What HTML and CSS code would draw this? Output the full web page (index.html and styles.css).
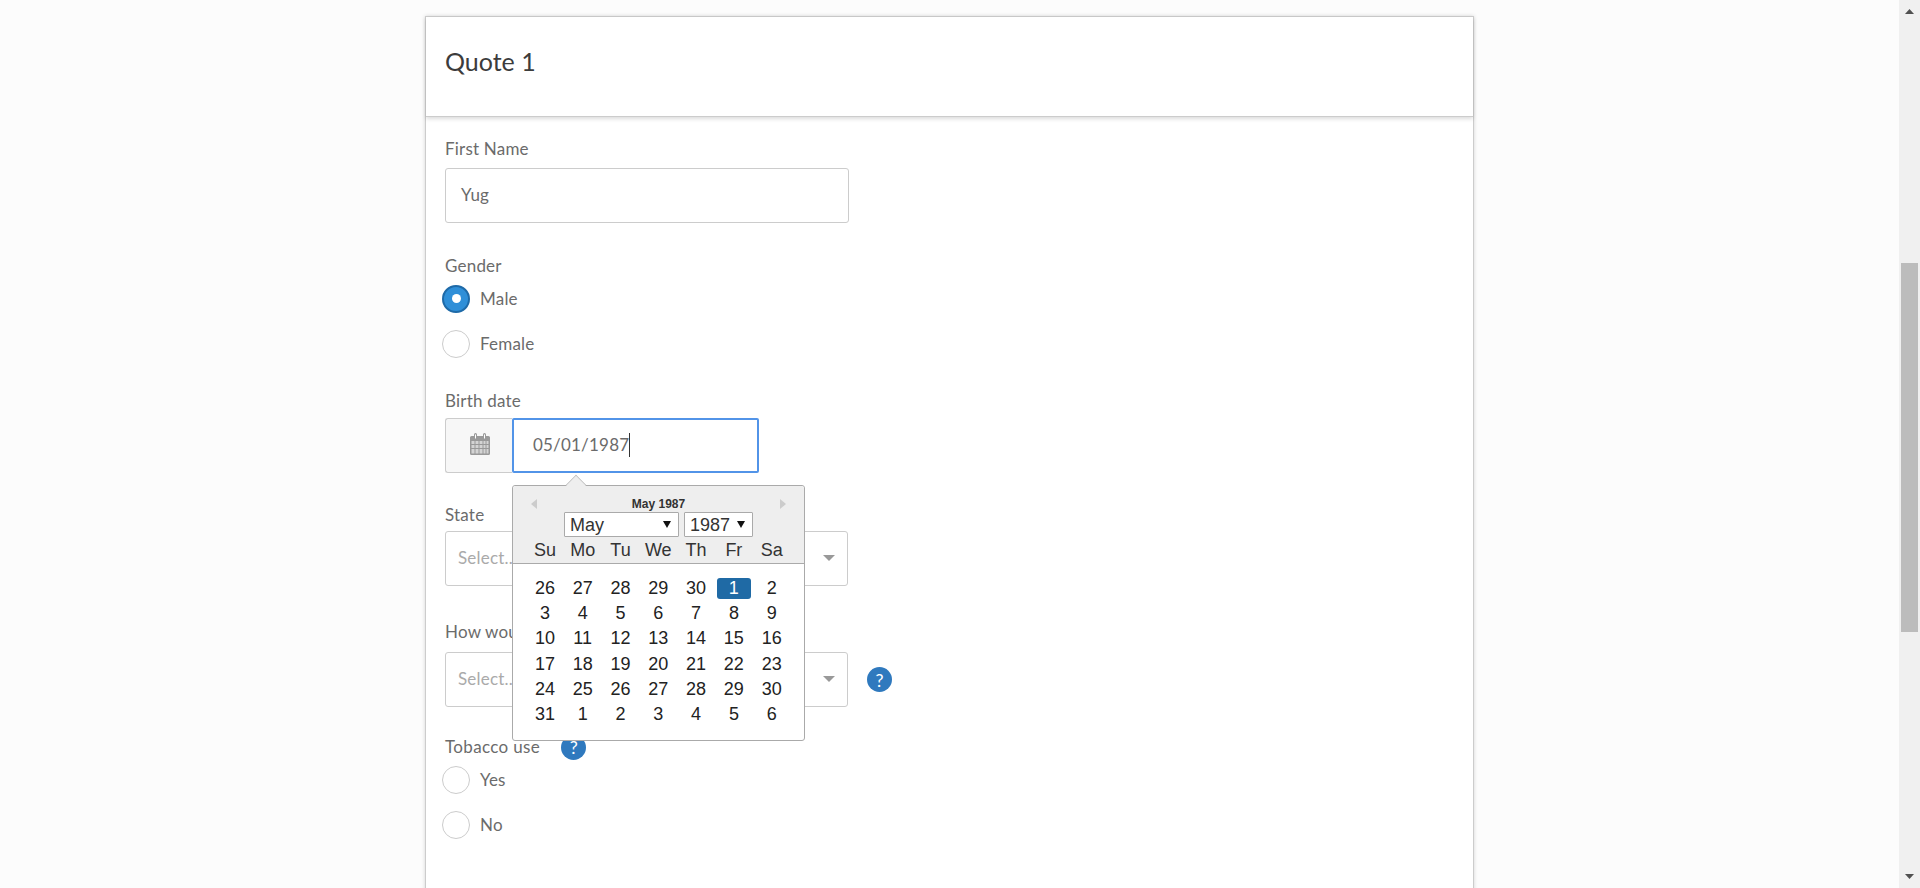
FILE: index.html
```html
<!DOCTYPE html>
<html lang="en">
<head>
<meta charset="utf-8">
<title>Quote 1</title>
<link rel="stylesheet" href="styles.css">
</head>
<body>
<main class="page">
  <section class="card">
    <header class="card-head"><h1 class="card-title">Quote 1</h1></header>
    <form class="card-body">
      <div class="field field-first">
        <div class="label">First Name</div>
        <div class="control control-text"><span>Yug</span></div>
      </div>
      <div class="field field-gender">
        <div class="label">Gender</div>
        <div class="radios">
          <div class="radio-row"><span class="radio radio-on"></span><span>Male</span></div>
          <div class="radio-row"><span class="radio"></span><span>Female</span></div>
        </div>
      </div>
      <div class="field field-birth">
        <div class="label label-tight">Birth date</div>
        <div class="date-group">
          <span class="addon">
            <svg class="cal-icon" width="20" height="23" viewBox="0 0 20 23" aria-hidden="true">
              <path fill="#999" d="M1.5 3H4V1.5a1.5 1.5 0 0 1 3 0V3h6V1.500a1.500 1.500 0 0 1 3 0V3h2.500A1.500 1.500 0 0 1 20 4.500v16a1.500 1.500 0 0 1-1.500 1.500h-17A1.500 1.500 0 0 1 0 20.500v-16A1.500 1.500 0 0 1 1.500 3z"/>
              <path fill="#fff" d="M5 1.500h1V5.500H5zM14 1.500h1V5.500h-1z"/>
              <path fill="#d4d4d4" d="M1.500 8h3v3h-3zM5.500 8h3v3h-3zM9.500 8h3v3h-3zM13.500 8h2v3h-2zM16.500 8h2v3h-2zM1.500 12h3v3h-3zM5.500 12h3v3h-3zM9.500 12h3v3h-3zM13.500 12h2v3h-2zM16.500 12h2v3h-2zM1.500 16h3v4.500h-3zM5.500 16h3v4.500h-3zM9.500 16h3v4.500h-3zM13.500 16h2v4.500h-2zM16.500 16h2v4.500h-2z"/>
            </svg>
          </span>
          <div class="date-input"><span>05/01/1987</span><span class="caret"></span></div>
          <div class="picker">
            <span class="picker-tip"></span>
            <div class="picker-head">
              <div class="picker-title">
                <span class="nav nav-prev"></span>
                <span>May 1987</span>
                <span class="nav nav-next"></span>
              </div>
              <div class="picker-selects">
                <span class="mini-select mini-month">May<i class="mini-arrow"></i></span>
                <span class="mini-select mini-year">1987<i class="mini-arrow"></i></span>
              </div>
              <div class="week-row"><span>Su</span><span>Mo</span><span>Tu</span><span>We</span><span>Th</span><span>Fr</span><span>Sa</span></div>
            </div>
            <div class="days">
              <span>26</span><span>27</span><span>28</span><span>29</span><span>30</span><span><b class="day-on">1</b></span><span>2</span>
              <span>3</span><span>4</span><span>5</span><span>6</span><span>7</span><span>8</span><span>9</span>
              <span>10</span><span>11</span><span>12</span><span>13</span><span>14</span><span>15</span><span>16</span>
              <span>17</span><span>18</span><span>19</span><span>20</span><span>21</span><span>22</span><span>23</span>
              <span>24</span><span>25</span><span>26</span><span>27</span><span>28</span><span>29</span><span>30</span>
              <span>31</span><span>1</span><span>2</span><span>3</span><span>4</span><span>5</span><span>6</span>
            </div>
          </div>
        </div>
      </div>
      <div class="field field-state">
        <div class="label label-tight">State</div>
        <div class="control control-select"><span>Select...</span><i class="select-caret"></i></div>
      </div>
      <div class="field field-how">
        <div class="label">How would you like</div>
        <div class="select-line">
          <div class="control control-select"><span>Select...</span><i class="select-caret"></i></div>
          <span class="help">?</span>
        </div>
      </div>
      <div class="field field-tobacco">
        <div class="label label-help">Tobacco use<span class="help">?</span></div>
        <div class="radios">
          <div class="radio-row"><span class="radio"></span><span>Yes</span></div>
          <div class="radio-row"><span class="radio"></span><span>No</span></div>
        </div>
      </div>
    </form>
  </section>
</main>
<aside class="scrollbar" aria-hidden="true">
  <svg class="sb-up" width="9" height="5" viewBox="0 0 9 5"><polygon points="4.500,0 9,5 0,5" fill="#505050"/></svg>
  <div class="sb-thumb"></div>
  <svg class="sb-down" width="9" height="5" viewBox="0 0 9 5"><polygon points="0,0 9,0 4.500,5" fill="#505050"/></svg>
</aside>
</body>
</html>
```
FILE: styles.css
```css
* { box-sizing: border-box; }
html, body { margin: 0; height: 888px; overflow: hidden; }
body {
  display: flex;
  background: #fcfcfc;
  color: #6b6b6b;
  font-family: "Lato", "Noto Sans", sans-serif;
  font-size: 17px;
  letter-spacing: 0.2px;
}
.page { flex: 1; min-width: 0; padding-top: 16px; }
.card {
  width: 1049px;
  height: 900px;
  margin: 0 auto;
  background: #fff;
  border: 1px solid #ccc;
  box-shadow: 0 0 4px rgba(0,0,0,.16);
}
.card-head {
  height: 100px;
  display: flex;
  align-items: center;
  padding: 0 19px 11px;
  border-bottom: 1px solid #ccc;
  box-shadow: 0 2px 4px rgba(0,0,0,.14);
}
.card-title { margin: 0; font-size: 25px; font-weight: 400; color: #3c3c3c; line-height: 32px; letter-spacing: 0; }
.card-body { padding: 21px 19px 0; }
.label { height: 22px; line-height: 22px; margin-bottom: 8px; }
.label-tight { margin-bottom: 6px; }
.field-gender { margin-top: 32px; }
.field-birth { margin-top: 33px; }
.field-state { margin-top: 31px; }
.field-state .label { margin-bottom: 5px; }
.field-how { margin-top: 35px; }
.field-how .label { margin-bottom: 9px; }
.field-tobacco { margin-top: 29px; }
.control {
  width: 404px;
  height: 55px;
  padding: 0 15px 3px;
  display: flex;
  align-items: center;
  background: #fff;
  border: 1px solid #ccc;
  border-radius: 3px;
}
.control-select {
  width: 403px;
  padding: 0 12px 2px;
  justify-content: space-between;
  color: #aaa;
}
.select-caret {
  width: 0; height: 0;
  border-left: 6px solid transparent;
  border-right: 6px solid transparent;
  border-top: 6px solid #999;
}
.select-line { display: flex; align-items: center; gap: 19px; }
.help {
  width: 25px; height: 25px;
  display: inline-flex;
  align-items: center;
  justify-content: center;
  border-radius: 50%;
  background: #2f79be;
  color: #fff;
  font-size: 18px;
  letter-spacing: 0;
}
.label-help { display: flex; align-items: center; gap: 21px; letter-spacing: 0.35px; }
.radios { margin-left: -3px; display: flex; flex-direction: column; gap: 18px; }
.radio-row { display: flex; align-items: center; gap: 10px; height: 27px; }
.radio {
  width: 28px; height: 28px;
  flex: none;
  border: 1px solid #ccc;
  border-radius: 50%;
  background: #fff;
  display: flex;
  align-items: center;
  justify-content: center;
}
.radio-on { background: #2f8fd8; border: 2px solid #1e6aa8; }
.radio-on::after { content: ""; width: 9px; height: 9px; border-radius: 50%; background: #fff; }
.date-group { position: relative; display: flex; width: 314px; height: 55px; }
.addon {
  width: 67px;
  flex: none;
  display: flex;
  justify-content: center;
  padding: 14px 0 0 2px;
  background: #f7f7f7;
  border: 1px solid #ccc;
  border-right: 0;
  border-radius: 3px 0 0 3px;
}
.cal-icon { display: block; }
.date-input {
  flex: 1;
  display: flex;
  align-items: center;
  padding: 0 0 2px 19px;
  border: 2px solid #5294e8;
  border-radius: 2px;
  background: #fff;
}
.caret { width: 1px; height: 24px; background: #333; }
.picker {
  position: absolute;
  left: 67px;
  top: 67px;
  width: 293px;
  height: 256px;
  background: #fff;
  border: 1px solid #aaa;
  border-radius: 3px;
  font-family: "Liberation Sans", Arial, sans-serif;
  font-size: 18px;
  letter-spacing: 0;
  color: #222;
  z-index: 5;
}
.picker-tip {
  position: absolute;
  left: 53px;
  top: -11px;
  width: 20px;
  height: 20px;
  background: #eee;
  border-left: 1px solid #bbb;
  border-top: 1px solid #bbb;
  transform: rotate(45deg) scale(.72);
}
.picker-head {
  position: relative;
  height: 78px;
  padding-top: 11px;
  background: #eee;
  border-bottom: 1px solid #aaa;
  border-radius: 3px 3px 0 0;
  color: #333;
}
.picker-title {
  display: flex;
  align-items: center;
  justify-content: space-between;
  height: 14px;
  padding: 0 18px;
  font-size: 12px;
  font-weight: 700;
}
.nav { width: 0; height: 0; border-top: 5px solid transparent; border-bottom: 5px solid transparent; }
.nav-prev { border-right: 6px solid #ccc; }
.nav-next { border-left: 6px solid #ccc; }
.picker-selects { display: flex; gap: 5px; margin: 1px 0 0 51px; }
.mini-select {
  position: relative;
  height: 25px;
  line-height: 24px;
  padding-left: 5px;
  background: #fff;
  border: 1px solid #aaa;
  border-radius: 1px;
}
.mini-month { width: 115px; }
.mini-year { width: 69px; }
.mini-arrow {
  position: absolute;
  right: 7px;
  top: 8px;
  width: 0; height: 0;
  border-left: 4px solid transparent;
  border-right: 4px solid transparent;
  border-top: 7px solid #111;
}
.week-row, .days {
  display: grid;
  grid-template-columns: repeat(7, 37.8px);
  padding-left: 13px;
  text-align: center;
}
.week-row { margin-top: 1px; line-height: 25px; }
.days { padding-top: 12px; grid-auto-rows: 25.2px; line-height: 25px; }
.days span { display: flex; align-items: center; justify-content: center; }
.day-on {
  width: 34px; height: 21px;
  line-height: 21px;
  font-weight: 400;
  background: #1f6aa5;
  color: #fff;
  border-radius: 3px;
}
.scrollbar {
  flex: none;
  width: 21px;
  height: 888px;
  background: #f0f0f0;
  display: flex;
  flex-direction: column;
  align-items: center;
  padding-top: 9px;
}
.sb-thumb { width: 17px; height: 369px; margin-top: 249px; background: #bcbcbc; }
.sb-down { margin-top: 242px; }
```
